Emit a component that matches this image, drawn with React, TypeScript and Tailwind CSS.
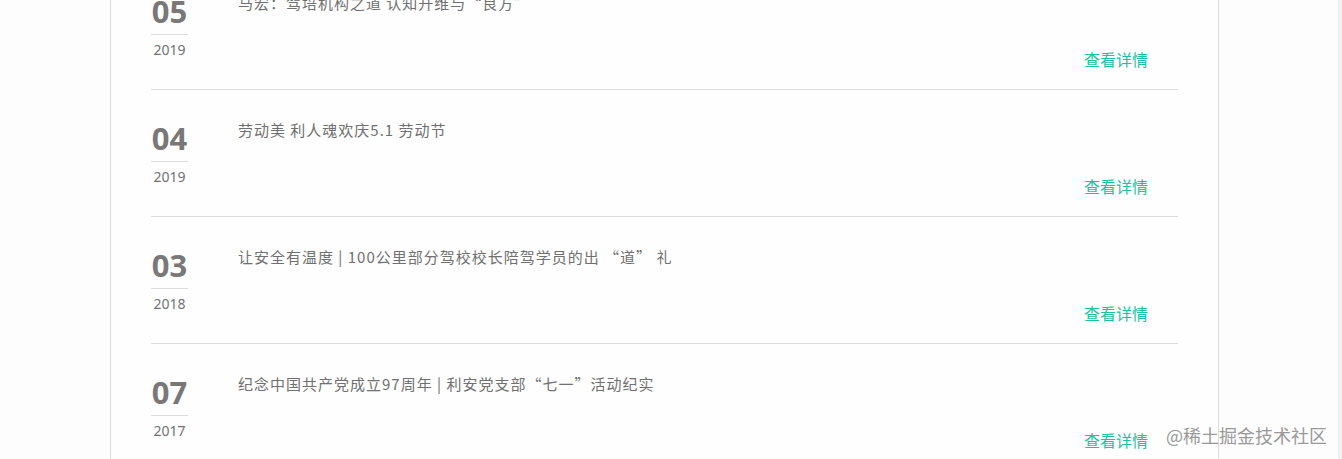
import React from 'react';

type News = { day: string; year: string; title: string };

const news: News[] = [
  { day: '05', year: '2019', title: '马宏：驾培机构之道 认知升维与“良方”' },
  { day: '04', year: '2019', title: '劳动美 利人魂欢庆5.1 劳动节' },
  { day: '03', year: '2018', title: '让安全有温度 | 100公里部分驾校校长陪驾学员的出 “道” 礼' },
  { day: '07', year: '2017', title: '纪念中国共产党成立97周年 | 利安党支部“七一”活动纪实' },
];

const cjk = { fontFamily: '"Noto Sans CJK SC", sans-serif' };

function NewsRow({ item }: { item: News }) {
  return (
    <div className="h-[127px] shrink-0 border-b border-[#dddddd] flex">
      <div className="w-[37px] shrink-0 pt-[33px] flex flex-col items-center">
        <p className="text-[31px] leading-[31px] font-bold text-[#7a7876]">{item.day}</p>
        <div className="w-full h-px bg-[#dddddd] mt-[7px]" />
        <p className="mt-[5px] text-[14px] leading-[20px] text-[#727272]">{item.year}</p>
      </div>
      <div className="flex-1 min-w-0 ml-[50px] pt-[29px] flex flex-col" style={cjk}>
        <p className="text-[15px] leading-[22px] tracking-[1px] text-[#707070] whitespace-pre">{item.title}</p>
        <a href="#" className="self-end mr-[30px] mt-[34px] text-[16px] leading-[22px] text-[#1cc29f]">查看详情</a>
      </div>
    </div>
  );
}

export default function App() {
  return (
    <div className="relative h-[459px] overflow-hidden bg-[#fdfdfd] flex" style={{ fontFamily: '"Noto Sans", "Noto Sans CJK SC", sans-serif' }}>
      <div className="flex-1 min-w-0">
        <div className="ml-[110px] w-[1109px] h-full bg-[#fefefe] border-x border-[#dcdcdc] px-[40px] flex flex-col">
          <div className="-mt-[37px] flex flex-col">
            {news.map((n) => (
              <NewsRow key={n.day + n.year} item={n} />
            ))}
          </div>
        </div>
      </div>
      <div className="w-[14px] shrink-0 flex justify-end">
        <div className="w-[4px] bg-[#f1f1f1]" />
      </div>
      <span className="absolute left-[1166px] top-[423px] text-[18px] leading-[24px] text-[#8f8f8f] opacity-90" style={cjk}>@稀土掘金技术社区</span>
    </div>
  );
}
